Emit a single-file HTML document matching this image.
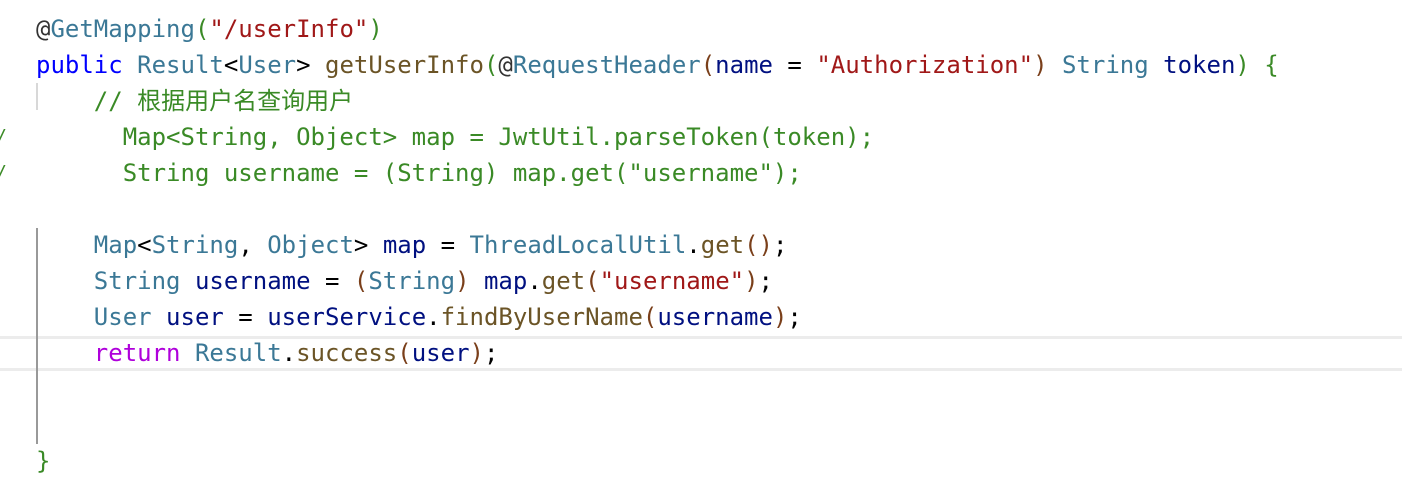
<!DOCTYPE html>
<html><head><meta charset="utf-8"><style>
html,body{margin:0;padding:0;background:#fff;width:1402px;height:480px;overflow:hidden;position:relative}
.l{position:absolute;left:36px;height:36px;line-height:36px;font-family:"DejaVu Sans Mono","Liberation Mono","Noto Sans CJK SC",monospace;font-size:24px;white-space:pre;color:#000}
.cur{position:absolute;left:0;width:1402px;top:336px;height:29px;border-top:3px solid #ececec;border-bottom:3px solid #ececec}
.k{color:#0000ff}.t{color:#3b7896}.m{color:#6b5426}.s{color:#a01818}.c{color:#3a8a26}.v{color:#001080}.p{color:#7a3f1a}.r{color:#af00db}.g{color:#3a8a26}.a{color:#333}
.gl{position:absolute;width:2px;left:36px}
</style></head><body>
<div class="cur"></div>
<div class="gl" style="top:83px;height:27px;background:#d8d8d8"></div>
<div class="gl" style="top:228px;height:216px;background:#999"></div>
<div class="l" style="top:11px"><span class="a">@</span><span class="t">GetMapping</span><span class="g">(</span><span class="s">"/userInfo"</span><span class="g">)</span></div>
<div class="l" style="top:47px"><span class="k">public</span> <span class="t">Result</span>&lt;<span class="t">User</span>&gt; <span class="m">getUserInfo</span><span class="g">(</span><span class="a">@</span><span class="t">RequestHeader</span><span class="p">(</span><span class="v">name</span> = <span class="s">"Authorization"</span><span class="p">)</span> <span class="t">String</span> <span class="v">token</span><span class="g">) {</span></div>
<div class="l c" style="top:83px">    // 根据用户名查询用户</div>
<div class="l c" style="top:119px">      Map&lt;String, Object&gt; map = JwtUtil.parseToken(token);</div>
<div class="l c" style="top:155px">      String username = (String) map.get("username");</div>
<div class="l c" style="left:-4px;top:119px;font-size:18px">/</div>
<div class="l c" style="left:-4px;top:155px;font-size:18px">/</div>
<div class="l" style="top:227px">    <span class="t">Map</span>&lt;<span class="t">String</span>, <span class="t">Object</span>&gt; <span class="v">map</span> = <span class="t">ThreadLocalUtil</span>.<span class="m">get</span><span class="p">()</span>;</div>
<div class="l" style="top:263px">    <span class="t">String</span> <span class="v">username</span> = <span class="p">(</span><span class="t">String</span><span class="p">)</span> <span class="v">map</span>.<span class="m">get</span><span class="p">(</span><span class="s">"username"</span><span class="p">)</span>;</div>
<div class="l" style="top:299px">    <span class="t">User</span> <span class="v">user</span> = <span class="v">userService</span>.<span class="m">findByUserName</span><span class="p">(</span><span class="v">username</span><span class="p">)</span>;</div>
<div class="l" style="top:335px">    <span class="r">return</span> <span class="t">Result</span>.<span class="m">success</span><span class="p">(</span><span class="v">user</span><span class="p">)</span>;</div>
<div class="l g" style="top:443px">}</div>
</body></html>
